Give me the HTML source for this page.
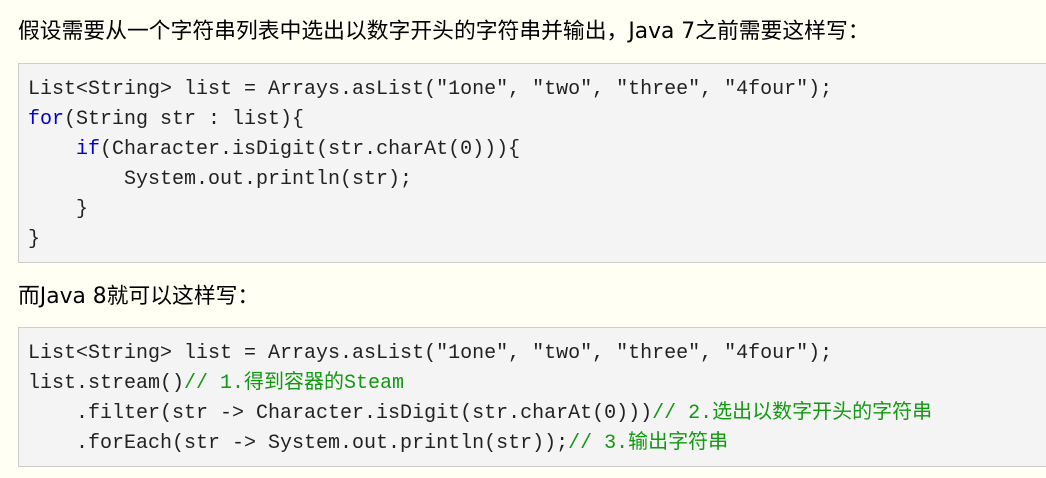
<!DOCTYPE html>
<html><head><meta charset="utf-8"><style>
html,body{margin:0;padding:0;background:#fffff4;width:1046px;height:478px;overflow:hidden}
p{position:absolute;left:18px;margin:0;font:21.8px/1 "DejaVu Sans","Noto Sans CJK SC",sans-serif;color:#000;white-space:nowrap}
.f{display:inline-block;width:1em}
pre{position:absolute;left:18px;width:1040px;margin:0;background:#f4f4f4;border:1px solid #ccc;box-sizing:border-box;
font:20px/30px "Liberation Mono","Noto Sans CJK SC",monospace;color:#222;padding:11px 9px 7px}
.k{color:#0000cc}.c{color:#119911}
</style></head><body>
<p style="top:21px">假设需要从一个字符串列表中选出以数字开头的字符串并输出<span class="f">，</span>Java 7之前需要这样写<span class="f">：</span></p>
<pre style="top:63px;height:200px">List&lt;String&gt; list = Arrays.asList("1one", "two", "three", "4four");
<span class="k">for</span>(String str : list){
    <span class="k">if</span>(Character.isDigit(str.charAt(0))){
        System.out.println(str);
    }
}</pre>
<p style="top:286px">而Java 8就可以这样写<span class="f">：</span></p>
<pre style="top:327px;height:140px">List&lt;String&gt; list = Arrays.asList("1one", "two", "three", "4four");
list.stream()<span class="c">// 1.得到容器的Steam</span>
    .filter(str -&gt; Character.isDigit(str.charAt(0)))<span class="c">// 2.选出以数字开头的字符串</span>
    .forEach(str -&gt; System.out.println(str));<span class="c">// 3.输出字符串</span></pre>
</body></html>
